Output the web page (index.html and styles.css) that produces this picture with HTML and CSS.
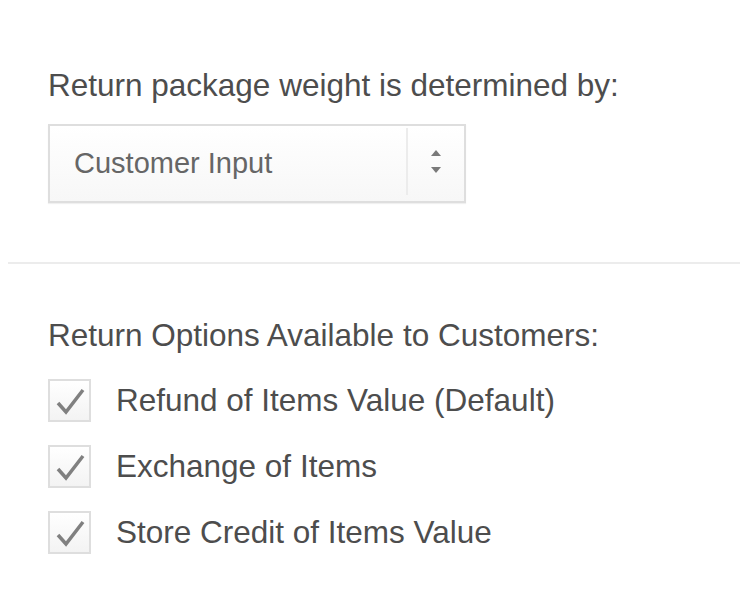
FILE: index.html
```html
<!DOCTYPE html>
<html>
<head>
    <title>Return Settings</title>
    <meta charset="UTF-8">
    <link rel="stylesheet" href="styles.css">
</head>
<body>

<div class="page">
    <div class="section">
        <div class="field-label">Return package weight is determined by:</div>
        <div class="select">
            <span class="select-value">Customer Input</span>
            <span class="select-arrows">
                <svg width="12" height="26" viewBox="0 0 12 26">
                    <path d="M1 7 L6 1 L11 7 Z" fill="#7a7a7a"/>
                    <path d="M1 18 L6 24 L11 18 Z" fill="#7a7a7a"/>
                </svg>
            </span>
        </div>
    </div>

    <div class="divider"></div>

    <div class="section">
        <div class="field-label">Return Options Available to Customers:</div>
        <ul class="options">
            <li class="option">
                <span class="checkbox">
                    <svg width="39" height="39" viewBox="0 0 39 39">
                        <path d="M8 22 L16 31 L33 9" fill="none" stroke="#808080" stroke-width="3.5"/>
                    </svg>
                </span>
                Refund of Items Value (Default)
            </li>
            <li class="option">
                <span class="checkbox">
                    <svg width="39" height="39" viewBox="0 0 39 39">
                        <path d="M8 22 L16 31 L33 9" fill="none" stroke="#808080" stroke-width="3.5"/>
                    </svg>
                </span>
                Exchange of Items
            </li>
            <li class="option">
                <span class="checkbox">
                    <svg width="39" height="39" viewBox="0 0 39 39">
                        <path d="M8 22 L16 31 L33 9" fill="none" stroke="#808080" stroke-width="3.5"/>
                    </svg>
                </span>
                Store Credit of Items Value
            </li>
        </ul>
    </div>
</div>

</body>
</html>
```

FILE: styles.css
```css
body{
    margin: 0;
    background-color: #ffffff;
    font-family: "Liberation Sans", Arial, Helvetica, sans-serif;
    color: #4d4d4d;
}

.page{
    padding: 67px 0 0 8px;
}

.section{
    padding-left: 40px;
}

.field-label{
    font-size: 31.5px;
    line-height: 36px;
}

.select{
    display: flex;
    align-items: stretch;
    width: 414px;
    height: 75px;
    margin-top: 21px;
    border: 2px solid #dedede;
    background: linear-gradient(#ffffff, #f7f7f7);
    box-shadow: 0 1px 1px rgba(0, 0, 0, 0.06);
}

.select-value{
    flex: 1;
    display: flex;
    align-items: center;
    padding-left: 24px;
    font-size: 29px;
    color: #666666;
}

.select-arrows{
    width: 56px;
    display: flex;
    align-items: center;
    justify-content: center;
    margin: 2px 0 6px;
    border-left: 2px solid #ececec;
}

.divider{
    height: 2px;
    margin: 59px 0 53px;
    background-color: #ececec;
}

.options{
    list-style: none;
    margin: 26px 0 0;
    padding: 0;
    display: flex;
    flex-direction: column;
    gap: 23px;
}

.option{
    display: flex;
    align-items: center;
    gap: 25px;
    font-size: 31.5px;
    line-height: 43px;
}

.checkbox{
    width: 39px;
    height: 39px;
    border: 2px solid #dedede;
    background: linear-gradient(#ffffff, #f3f3f3);
    display: flex;
    align-items: center;
    justify-content: center;
}
```
